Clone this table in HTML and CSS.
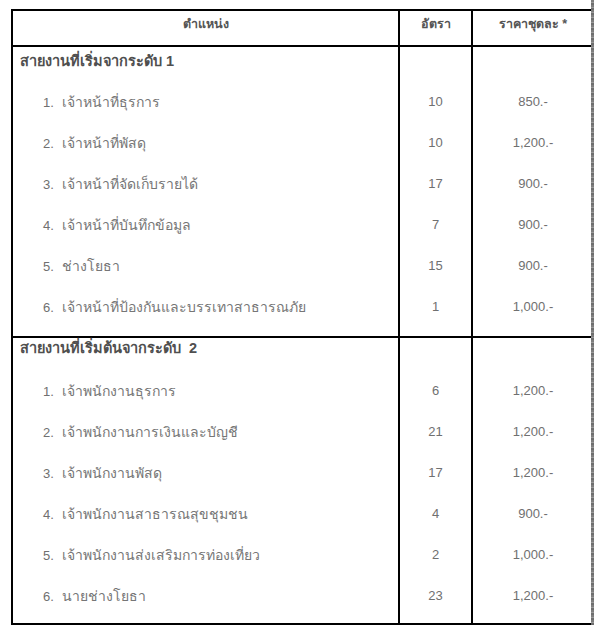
FILE: index.html
```html
<!DOCTYPE html>
<html lang="th">
<head>
<meta charset="utf-8">
<link rel="stylesheet" href="styles.css">
<title>ตำแหน่ง</title>
</head>
<body>
<div class="page">
  <div class="area">
    <table class="tbl">
      <colgroup><col class="c1"><col class="c2"><col class="c3"></colgroup>
      <thead>
        <tr><th>ตำแหน่ง</th><th>อัตรา</th><th>ราคาชุดละ *</th></tr>
      </thead>
      <tbody>
        <tr class="sec sec1">
          <td>
            <div class="ln head">สายงานที่เริ่มจากระดับ 1</div>
            <div class="ln item"><span class="no">1.</span><span class="th">เจ้าหน้าที่ธุรการ</span></div>
            <div class="ln item"><span class="no">2.</span><span class="th">เจ้าหน้าที่พัสดุ</span></div>
            <div class="ln item"><span class="no">3.</span><span class="th">เจ้าหน้าที่จัดเก็บรายได้</span></div>
            <div class="ln item"><span class="no">4.</span><span class="th">เจ้าหน้าที่บันทึกข้อมูล</span></div>
            <div class="ln item"><span class="no">5.</span><span class="th">ช่างโยธา</span></div>
            <div class="ln item"><span class="no">6.</span><span class="th">เจ้าหน้าที่ป้องกันและบรรเทาสาธารณภัย</span></div>
          </td>
          <td class="num">
            <div class="ln head"></div>
            <div class="ln item">10</div><div class="ln item">10</div><div class="ln item">17</div>
            <div class="ln item">7</div><div class="ln item">15</div><div class="ln item">1</div>
          </td>
          <td class="num">
            <div class="ln head"></div>
            <div class="ln item">850.-</div><div class="ln item">1,200.-</div><div class="ln item">900.-</div>
            <div class="ln item">900.-</div><div class="ln item">900.-</div><div class="ln item">1,000.-</div>
          </td>
        </tr>
        <tr class="sec sec2">
          <td>
            <div class="ln head">สายงานที่เริ่มต้นจากระดับ&nbsp; 2</div>
            <div class="ln item"><span class="no">1.</span><span class="th">เจ้าพนักงานธุรการ</span></div>
            <div class="ln item"><span class="no">2.</span><span class="th">เจ้าพนักงานการเงินและบัญชี</span></div>
            <div class="ln item"><span class="no">3.</span><span class="th">เจ้าพนักงานพัสดุ</span></div>
            <div class="ln item"><span class="no">4.</span><span class="th">เจ้าพนักงานสาธารณสุขชุมชน</span></div>
            <div class="ln item"><span class="no">5.</span><span class="th">เจ้าพนักงานส่งเสริมการท่องเที่ยว</span></div>
            <div class="ln item"><span class="no">6.</span><span class="th">นายช่างโยธา</span></div>
          </td>
          <td class="num">
            <div class="ln head"></div>
            <div class="ln item">6</div><div class="ln item">21</div><div class="ln item">17</div>
            <div class="ln item">4</div><div class="ln item">2</div><div class="ln item">23</div>
          </td>
          <td class="num">
            <div class="ln head"></div>
            <div class="ln item">1,200.-</div><div class="ln item">1,200.-</div><div class="ln item">1,200.-</div>
            <div class="ln item">900.-</div><div class="ln item">1,000.-</div><div class="ln item">1,200.-</div>
          </td>
        </tr>
      </tbody>
    </table>
  </div>
  <div class="strip"></div>
</div>
</body>
</html>
```

FILE: styles.css
```css
html, body {
  margin: 0;
  padding: 0;
  background: #fff;
}
body {
  font-family: "Liberation Sans", Tahoma, "Noto Sans", sans-serif;
  font-size: 13px;
  color: #707070;
}
.page {
  display: flex;
  width: 594px;
  height: 625px;
  overflow: hidden;
}
.area {
  width: 591px;
  overflow: hidden;
  padding: 9px 0 0 11px;
  box-sizing: border-box;
}
.strip {
  width: 3px;
  background: repeating-linear-gradient(180deg, #7d7d7d 0 2px, #9a9a9a 2px 3px, #6e6e6e 3px 5px);
}
.tbl {
  border-collapse: collapse;
  width: 582px;
  table-layout: fixed;
}
.c1 { width: 387px; }
.c2 { width: 73px; }
.c3 { width: 122px; }
.tbl th, .tbl td {
  border: 2px solid #000;
  vertical-align: top;
  padding: 0;
}
.tbl th {
  height: 36px;
  font-weight: bold;
  font-size: 12.5px;
  color: #555;
  text-align: center;
  padding-top: 5px;
  line-height: 16px;
  box-sizing: border-box;
}
.ln {
  height: 16px;
  line-height: 16px;
  white-space: nowrap;
}
.head {
  font-weight: bold;
  font-size: 14.5px;
  color: #4f4f4f;
  padding-left: 7px;
}
.item .no {
  display: inline-block;
  width: 19px;
  margin-left: 30px;
}
.item .th {
  font-size: 14px;
  color: #767676;
}
.num .item { text-align: center; }
.sec1 td { padding: 6px 0 21px; }
.sec1 .item { margin-top: 25px; }
.sec2 td { padding: 2px 0 19px; }
.sec2 .item { margin-top: 25px; }
.sec2 .ln.item:nth-child(2) { margin-top: 27px; }
```
